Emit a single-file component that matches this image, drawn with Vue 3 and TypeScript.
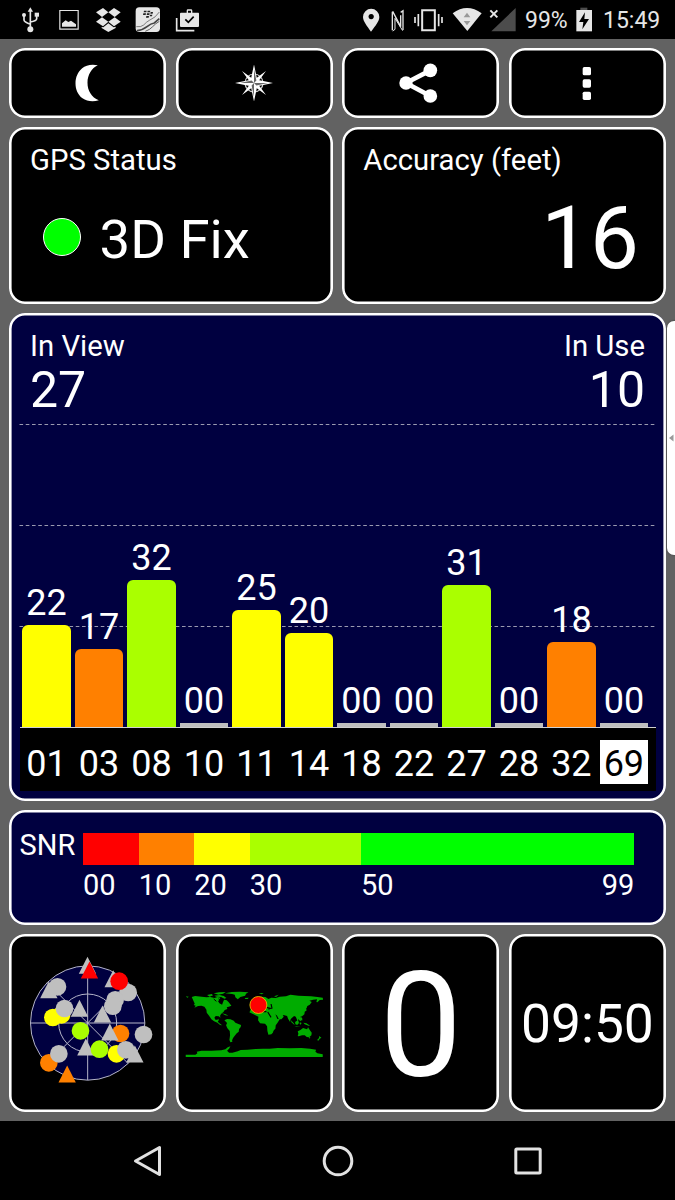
<script setup lang="ts">
interface Sat {
  id: string
  snr: string
  height: number
  color: string
  selected?: boolean
}

const YELLOW = '#ffff00'
const ORANGE = '#ff8000'
const LIME = '#aaff00'
const GREY = '#bfbfbf'
const RED = '#ff0000'

const sats: Sat[] = [
  { id: '01', snr: '22', height: 102.5, color: YELLOW },
  { id: '03', snr: '17', height: 78.5, color: ORANGE },
  { id: '08', snr: '32', height: 147.5, color: LIME },
  { id: '10', snr: '00', height: 4.5, color: GREY },
  { id: '11', snr: '25', height: 117, color: YELLOW },
  { id: '14', snr: '20', height: 94.5, color: YELLOW },
  { id: '18', snr: '00', height: 4.5, color: GREY },
  { id: '22', snr: '00', height: 4.5, color: GREY },
  { id: '27', snr: '31', height: 142, color: LIME },
  { id: '28', snr: '00', height: 4.5, color: GREY },
  { id: '32', snr: '18', height: 85, color: ORANGE },
  { id: '69', snr: '00', height: 4.5, color: GREY, selected: true },
]

const legend = [
  { label: '00', width: 55.7, color: RED },
  { label: '10', width: 55.5, color: ORANGE },
  { label: '20', width: 55.6, color: YELLOW },
  { label: '30', width: 111.2, color: LIME },
  { label: '50', width: 273.3, color: '#00ff00', end: '99' },
]

interface Mark {
  t: 'c' | 't'
  x: number
  y: number
  c: string
}

/* Sky plot markers in paint order: circles by centre, triangles by apex. */
const sky: Mark[] = [
  { t: 't', x: 262, y: 82, c: GREY },
  { t: 't', x: 268, y: 96, c: RED },
  { t: 't', x: 146, y: 155, c: GREY },
  { t: 'c', x: 172, y: 172, c: GREY },
  { t: 't', x: 339, y: 122, c: GREY },
  { t: 'c', x: 384, y: 189, c: GREY },
  { t: 'c', x: 357, y: 155, c: RED },
  { t: 'c', x: 345, y: 211, c: GREY },
  { t: 'c', x: 338, y: 230, c: GREY },
  { t: 'c', x: 184, y: 256, c: YELLOW },
  { t: 'c', x: 158, y: 264, c: YELLOW },
  { t: 'c', x: 193, y: 237, c: GREY },
  { t: 't', x: 238, y: 211, c: GREY },
  { t: 't', x: 307, y: 228, c: GREY },
  { t: 'c', x: 361, y: 312, c: ORANGE },
  { t: 't', x: 329, y: 282, c: GREY },
  { t: 'c', x: 430, y: 315, c: GREY },
  { t: 'c', x: 241, y: 304, c: LIME },
  { t: 't', x: 257, y: 327, c: GREY },
  { t: 'c', x: 298, y: 359, c: LIME },
  { t: 'c', x: 349, y: 373, c: YELLOW },
  { t: 't', x: 404, y: 348, c: GREY },
  { t: 'c', x: 377, y: 361, c: GREY },
  { t: 'c', x: 146, y: 400, c: ORANGE },
  { t: 'c', x: 176, y: 373, c: GREY },
  { t: 't', x: 201, y: 408, c: ORANGE },
]

const isCircle = (m: Mark) => m.t === 'c'
const tri = (m: Mark) => `M${m.x} ${m.y}l26 51h-52z`
</script>

<template>
  <div class="screen">
    <header class="status">
      <svg class="slot" viewBox="33 0 117 117">
        <g fill="none" stroke="#e6e6e6" stroke-width="5">
          <path d="M91 30V90M72 46V60Q72 65 91 73M110 46V56Q110 62 91 66" />
        </g>
        <g fill="#e6e6e6">
          <path d="M91 22l8 13H83z" />
          <circle cx="91" cy="88" r="9" />
          <circle cx="72" cy="45" r="6" />
          <path d="M104 38h13v12h-13z" />
        </g>
      </svg>
      <svg class="slot" viewBox="150 0 117 117">
        <path d="M179.500 31.500h55v56h-55z" fill="none" stroke="#e6e6e6" stroke-width="3.500" />
        <path d="M186 80V70l11-9 8 5 8-4 15 11v7z" fill="#e6e6e6" />
      </svg>
      <svg class="slot" viewBox="267 0 117 117">
        <g fill="#e6e6e6">
          <path d="M309 24l16 13-19 14-18-14z" />
          <path d="M342 24l20 13-18 14-19-14z" />
          <path d="M306 52l19 13-16 14-21-14z" />
          <path d="M344 52l18 13-20 14-17-14z" />
          <path d="M305 81l5 1 15-12 16 12 6-2v4l-22 12-20-12z" />
        </g>
      </svg>
      <svg class="slot" viewBox="384 0 117 117">
        <rect x="407" y="22" width="73" height="74" rx="11" fill="#e6e6e6" />
        <g fill="#222">
          <path d="M432 32h8l-1 5h-8zM443 32h8l-1 5h-8zM430 40h8l-1 5h-8zM441 40h8l-1 5h-8zM452 36h7l-1 5h-7zM450 44h7l-1 5h-7zM439 48h8l-1 5h-8z" />
        </g>
        <g fill="none" stroke="#444">
          <path d="M409 80q14 2 22-5 8-9 17-14 19-8 30-25" stroke-width="2" />
          <path d="M411 92q18-2 30-12t22-11l15-13" stroke-width="5" />
          <path d="M436 94q14-5 22-14t20-16" stroke-width="2.500" />
        </g>
      </svg>
      <svg class="slot" viewBox="501 0 117 117">
        <path d="M530 54v38h53" fill="none" stroke="#e6e6e6" stroke-width="5" />
        <path fill="#e6e6e6" fill-rule="evenodd" d="M543 38h17v-6q0-4 4-4h9q4 0 4 4v6h18q2 0 2 3v37q0 3-3 3h-51q-3 0-3-3V41q0-3 3-3zM564 32v6h9v-6z" />
        <path d="M556 58l9 9 16-17" fill="none" stroke="#000" stroke-width="5" />
      </svg>

      <span class="spring"></span>

      <svg class="s-loc" viewBox="30 0 70 117">
        <path fill="#e6e6e6" fill-rule="evenodd" d="M63 95C50 76 39 64 39 51a24 24 0 0 1 49 0C88 64 77 76 63 95zM63.500 42a8 8 0 1 0 .1 0z" />
      </svg>
      <svg class="s-nfc" viewBox="100 0 80 117">
        <g fill="none" stroke="#e6e6e6">
          <path d="M128 91V35" stroke-width="4" />
          <path d="M129 34l24 46V46" stroke-width="4" />
          <path d="M129 93l7-5V55l23 37" stroke-width="3" />
          <path d="M160 90V32l-7 5" stroke-width="4" />
        </g>
      </svg>
      <svg class="s-vib" viewBox="180 0 110 117">
        <path d="M216.500 30.500h38v60h-38z" fill="none" stroke="#e6e6e6" stroke-width="6" />
        <g stroke="#e6e6e6" stroke-width="5">
          <path d="M205 42v37M266 42v37M195 51v18M276 51v18" />
        </g>
      </svg>
      <svg class="s-wifi" viewBox="290 0 115 117">
        <path d="M307 40Q350 8 394 40L351 93z" fill="#e6e6e6" />
        <path d="M350 38l10 14h-20zM350 76l-10-13h20z" fill="#999" />
      </svg>
      <svg class="s-sig" viewBox="405 0 105 117">
        <path d="M497 24v70h-73z" fill="#4c4c4c" />
        <path d="M421 31l21 21M442 31l-21 21" stroke="#e6e6e6" stroke-width="6" />
      </svg>
      <span class="batt-text">99%</span>
      <svg class="s-bat" viewBox="672 0 60 117">
        <path d="M691 23h21v7h-21z" fill="#4c4c4c" />
        <path fill="#e6e6e6" d="M679 30h47v64h-47z" />
        <path d="M705 37l-18 29h13l-3 22 20-31h-14z" fill="#000" />
      </svg>
      <span class="clock">15:49</span>
    </header>

    <main class="board">
      <div class="row quad toolbar">
        <button class="tile">
          <svg viewBox="142.500 144 240 210"><path fill="#fff" d="M292 196C272 192 256 196 245 205C232 216 225 232 225 250C225 268 232 285 246 295C259 304 277 306 295 301C273 291 261 272 261 248C261 226 273 204 292 196z" /></svg>
        </button>
        <button class="tile">
          <svg viewBox="213.500 48 80 70">
            <circle cx="253.500" cy="83" r="9" fill="none" stroke="#ccc" stroke-width="1.200" />
            <g fill="#fff">
              <path d="M241.500 71l9.500 7 2.500 5-5-2.500zM265.500 71l-9.500 7-2.500 5 5-2.500zM241.500 95l9.500-7 2.500-5-5 2.500zM265.500 95l-9.500-7-2.500-5 5 2.500z" />
              <path d="M253.500 64.500l3.200 15.300 15.800 3.200-15.800 3.200-3.200 15.300-3.200-15.300-15.800-3.200 15.800-3.200z" />
            </g>
            <path d="M253.500 69V83l2.400-2.400zM267.500 83H253.500l2.400 2.400zM253.500 97V83l-2.400 2.400zM239.500 83H253.500l-2.400-2.400z" fill="#000" opacity=".6" />
          </svg>
        </button>
        <button class="tile">
          <svg viewBox="92 144 240 210">
            <path d="M240 211L167 249L240 288" fill="none" stroke="#fff" stroke-width="14" />
            <g fill="#fff"><circle cx="167" cy="249" r="20" /><circle cx="240" cy="211" r="20.500" /><circle cx="240" cy="288" r="20.500" /></g>
          </svg>
        </button>
        <button class="tile">
          <svg viewBox="591 144 240 210"><g fill="#fff"><rect x="698" y="201" width="25" height="25" rx="5" /><rect x="698" y="238" width="25" height="25" rx="5" /><rect x="698" y="275" width="25" height="25" rx="5" /></g></svg>
        </button>
      </div>

      <div class="row pair">
        <section class="tile info">
          <div class="label">GPS Status</div>
          <div class="fix"><i class="dot"></i><span>3D Fix</span></div>
        </section>
        <section class="tile info">
          <div class="label">Accuracy (feet)</div>
          <div class="accuracy">16</div>
        </section>
      </div>

      <section class="tile chart">
        <svg class="grid" viewBox="9 313 657 488">
          <g stroke="#9a9ab0" stroke-width="1.200" stroke-dasharray="3.600 2.650">
            <path d="M19.500 424.500H655M19.500 525.500H655M19.500 626.500H655" />
          </g>
        </svg>
        <div class="counts">
          <div><div class="label">In View</div><div class="num">27</div></div>
          <div class="right"><div class="label">In Use</div><div class="num">10</div></div>
        </div>
        <div class="bars">
          <div v-for="s in sats" :key="s.id" class="col">
            <span class="val">{{ s.snr }}</span>
            <i class="bar" :class="{ empty: s.snr === '00' }" :style="{ height: s.height + 'px', background: s.color }"></i>
          </div>
        </div>
        <div class="ids">
          <span v-for="s in sats" :key="s.id" class="sid" :class="{ sel: s.selected }">{{ s.id }}</span>
        </div>
      </section>

      <section class="tile snr">
        <span class="name">SNR</span>
        <div class="scale">
          <div v-for="l in legend" :key="l.label" class="seg" :style="{ width: l.width + 'px' }">
            <i :style="{ background: l.color }"></i>
            <div class="ticks"><span>{{ l.label }}</span><span v-if="l.end">{{ l.end }}</span></div>
          </div>
        </div>
      </section>

      <div class="row quad bottom">
        <section class="tile">
          <svg class="sky" viewBox="53.500 79.500 417 402">
            <circle cx="262.500" cy="280.500" r="171.500" fill="#000040" />
            <g fill="none" stroke="#b4b4c8" stroke-width="3">
              <circle cx="262.500" cy="280.500" r="171.500" />
              <circle cx="262.500" cy="280.500" r="87" />
              <path d="M91 280.500H434M262.500 109V452M141 159L384 402M384 159L141 402" />
            </g>
            <template v-for="(m, i) in sky" :key="i">
              <circle v-if="isCircle(m)" :cx="m.x" :cy="m.y" r="26.500" :fill="m.c" />
              <path v-else :d="tri(m)" :fill="m.c" />
            </template>
          </svg>
        </section>
        <section class="tile">
          <svg class="world" viewBox="34.800 54 420 210">
            <g fill="#00ac00">
              <path d="M58 81l10-3 20 2 14 2 12-1 12 3 10-3 8 2-3 6-4 5 4 6 8 4 3-8 3-7 8 2 6 6 8 10-8 3-6 2 2 5-8 3-4 6-7 6-3 5 1 6-5-4-9-1-4 5 3 6 6 0 3-3 1 5-3 4 5 5 6 4 2 2-6-1-8-7-10-4-8-6-7-11-7-9-1-9-6-9-9-3-10 1-11 5 4-6-6-2 3-4z" />
              <path d="M104 75l14-3 4 4-10 4zM124 70l16-3 20-1-8 5-14 3zM126 77l16-2 12 3 8 6-6 2-10-5-14-1zM40 79l9 1-4 3z" />
              <path d="M158 70l20-4 24-1 26 2-7 4-3 6-14 4-8 7-7-6-2-8-8-2z" />
              <path d="M217 84l12-1-3 4-7 0zM259 70l15-1-6 4zM305 79l14-5-8 7z" />
              <path d="M148 130l12 3 8 4-9-1zM156 151l8-4 10 1 10 4 5 6 9 4 8 3-1 6-5 6-1 8-6 5-6 7-5 7-3 7 1 4-6 2-3-7 2-14-1-13-7-8-4-9 3-7z" />
              <path d="M231 127l4-8 2-9 10-2-5-5 9-7 9-3-6-5 11-8 14 1 9 6 9-4 13 1 12-4 19-1 13-5 24 3 18 1 20 1 19 2 16 2 1 6-10 1-7 7-3-1 2-8-12 1-11 3 7 4-6 8-7 4-4 8 2 5-6 4-1 8-7 6-5 1 4 8-4 6-7-7 1 10 4 6-5-3-3-11-4-9-5-2-10 9-2 9-6-10-3-8-8-2-5-1 3 5-7 8-8-1-5-10-5-4 6 14 8-1-8 13-5 7-1 10-5 5-3 7-4 5-9 1-3-11-1-14-6-8-15-1-6-9 1-11z" />
              <path d="M302 174l1 7-4 9-4-5zM240 92l6 1 1 7-8 1 2-4zM390 121l6-4 4-6 3 1-4 8-8 4zM400 94l4 8-2 4z" />
              <path d="M356 151l8 9 3 6-10-9zM368 156l8-5 3 6-4 8-6-2zM382 157l6 2-5 6zM393 158l9 2 11 7-5 0-11-4zM366 168l18 2-12 0zM386 140l4 6-1 7-5-6z" />
              <path d="M376 184l8-4 8-6 7 2 5 2 3-6 5 8 6 8-1 8-7 6-7-1-6-5-8 0-10 3-3-1 2-7zM409 202l5 0-3 4zM440 198l7 5-5 3-4 6-4-2 6-6z" />
              <path d="M40 254l29 0 6-4-2-5 14-3 30 0 30-1 12-3 7-6 8-3-4 7-6 6 6 6 10 0 16-4 9-4 20-1 25-2 22-1 20 0 24-2 36 1 35-1 26 2 18 3-2 6 6 5 16 3v8H40z" />
            </g>
            <path d="M240 122l16-1 10 4 16 0M276 117l7-5 11 3-6 3M296 102l3 14M286 126l10 16" fill="none" stroke="#000" stroke-width="3.500" />
            <path d="M124 87l8 7M139 86l6 8 4-3" fill="none" stroke="#000" stroke-width="3" />
            <circle cx="258" cy="105" r="25.500" fill="#f00" stroke="#e6c800" stroke-width="2.500" />
          </svg>
        </section>
        <section class="tile"><span class="speed">0</span></section>
        <section class="tile"><span class="time">09:50</span></section>
      </div>
    </main>

    <div class="handle">
      <svg viewBox="0 0 5 8"><path d="M0 4L4.500 .5v7z" fill="#9a9a9a" /></svg>
    </div>

    <nav class="nav">
      <svg viewBox="0 0 40 40"><path d="M7.500 20L31.500 6.500V33.500z" /></svg>
      <svg viewBox="0 0 40 40"><circle cx="20" cy="20" r="13.800" /></svg>
      <svg viewBox="0 0 40 40"><rect x="7.800" y="8" width="24.400" height="24" rx="1" /></svg>
    </nav>
  </div>
</template>

<style>
body {
  background: #000;
}
</style>

<style scoped>
.screen {
  position: relative;
  width: 675px;
  height: 1200px;
  overflow: hidden;
  background: #000;
  color: #fff;
  font-family: Roboto, sans-serif;
  display: flex;
  flex-direction: column;
}
svg {
  display: block;
  flex: none;
}
.status {
  height: 39px;
  display: flex;
  padding: 0 13px 0 10.700px;
  color: #e6e6e6;
  font-size: 23px;
  line-height: 42px;
  white-space: nowrap;
}
.status svg {
  height: 39px;
}
.slot {
  width: 39px;
}
.spring {
  flex: 1;
}
.s-loc { width: 23.333px; }
.s-nfc { width: 26.667px; }
.s-vib { width: 36.667px; }
.s-wifi { width: 38.333px; }
.s-sig { width: 35px; }
.batt-text {
  width: 54px;
  padding-left: 5px;
  box-sizing: border-box;
}
.s-bat { width: 20px; }
.clock {
  width: 58px;
  margin-left: 9px;
  margin-right: 1px;
}
.board {
  height: 1082px;
  box-sizing: border-box;
  padding: 9px;
  background: #626262;
  display: flex;
  flex-direction: column;
  gap: 9px;
}
.row {
  display: grid;
  gap: 9.600px;
}
.quad {
  grid-template-columns: repeat(4, 1fr);
}
.pair {
  grid-template-columns: repeat(2, 1fr);
  height: 177px;
}
.toolbar {
  height: 70px;
}
.bottom {
  height: 178px;
}
.tile {
  background: #000;
  color: #fff;
  border: 0;
  padding: 0;
  border-radius: 16px;
  box-shadow: inset 0 0 0 2.600px #fff;
  display: flex;
  align-items: center;
  justify-content: center;
  min-width: 0;
  box-sizing: border-box;
}
.toolbar svg {
  width: 80px;
  height: 70px;
}
.info {
  flex-direction: column;
  align-items: stretch;
  justify-content: flex-start;
  padding: 18px 27px 0 21px;
}
.label {
  font-size: 29.300px;
  line-height: 30px;
}
.fix {
  display: flex;
  align-items: center;
  gap: 19px;
  margin: 37px 0 0 12.500px;
  font-size: 54.500px;
  line-height: 54px;
}
.dot {
  width: 38px;
  height: 38px;
  margin-top: -4px;
  box-sizing: border-box;
  border: 1px solid #fff;
  border-radius: 50%;
  background: #0f0;
}
.accuracy {
  font-size: 87px;
  line-height: 88px;
  margin-top: 19px;
  text-align: right;
}
.chart {
  position: relative;
  height: 488px;
  background: #000040;
  flex-direction: column;
  align-items: stretch;
  justify-content: flex-start;
}
.grid {
  position: absolute;
  inset: 0;
  width: 657px;
  height: 488px;
}
.counts {
  display: flex;
  justify-content: space-between;
  padding: 18.200px 21px 0;
}
.right {
  text-align: right;
}
.num {
  font-size: 50px;
  line-height: 52px;
  margin-top: 3px;
}
.bars {
  position: relative;
  flex: 1;
  display: flex;
  margin: 0 10.500px;
  padding-left: .8px;
  border-bottom: 1px solid #d0d0d0;
}
.col {
  width: 52.500px;
  flex: none;
  display: flex;
  flex-direction: column;
  justify-content: flex-end;
  align-items: center;
}
.val {
  font-size: 36px;
  line-height: 36px;
  margin-bottom: 3.800px;
}
.bar {
  width: 48.300px;
  border-radius: 6px 6px 0 0;
}
.bar.empty {
  border-radius: 0;
}
.ids {
  position: relative;
  height: 63px;
  margin: 0 10.500px 10px;
  padding: 12px 0 7px 2.900px;
  box-sizing: border-box;
  background: #000;
  display: flex;
  gap: 4.200px;
}
.sid {
  width: 48.300px;
  flex: none;
  text-align: center;
  font-size: 36px;
  line-height: 48px;
}
.sel {
  background: #fff;
  color: #000;
}
.snr {
  height: 115px;
  background: #000040;
  align-items: flex-start;
  justify-content: flex-start;
  padding: 23px 0 0 10.500px;
  font-size: 29px;
}
.name {
  width: 63.500px;
  line-height: 25px;
}
.scale {
  display: flex;
}
.seg i {
  display: block;
  height: 31.500px;
}
.ticks {
  display: flex;
  justify-content: space-between;
  line-height: 40px;
}
.sky {
  width: 139px;
  height: 134px;
}
.world {
  width: 140px;
  height: 70px;
}
.speed {
  font-size: 147px;
  line-height: 148px;
  padding-top: 6px;
}
.time {
  font-size: 53.300px;
  line-height: 54px;
  padding-top: 2px;
}
.handle {
  position: absolute;
  left: 666.500px;
  top: 321px;
  width: 20px;
  height: 234px;
  border-radius: 7px;
  background: #fff;
  box-shadow: 0 0 2px #333;
  display: flex;
  align-items: center;
}
.handle svg {
  width: 5px;
  height: 8px;
  margin-left: 2px;
}
.nav {
  flex: 1;
  display: flex;
  justify-content: center;
  gap: 150px;
  align-items: center;
}
.nav svg {
  width: 40px;
  height: 40px;
  fill: none;
  stroke: #e2e2e2;
  stroke-width: 3;
  stroke-linejoin: round;
}
</style>
